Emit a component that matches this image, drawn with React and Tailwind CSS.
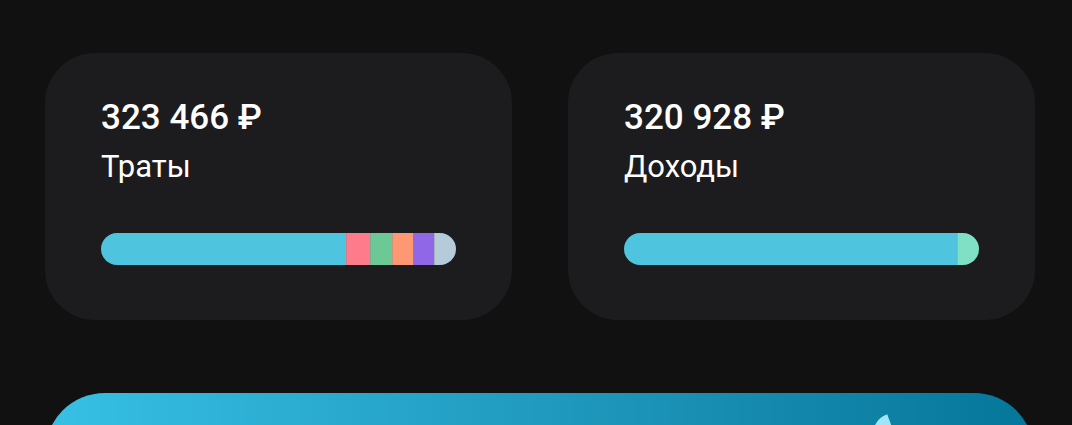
export default function App() {
  const spend = [
    { w: 245, c: "bg-[#4fc4df]" },
    { w: 24, c: "bg-[#fe7b8c]" },
    { w: 22, c: "bg-[#6cc894]" },
    { w: 21, c: "bg-[#fe9872]" },
    { w: 21, c: "bg-[#9067e6]" },
    { w: 22, c: "bg-[#b6cbd9]" },
  ];
  const income = [
    { w: 333, c: "bg-[#4fc4df]" },
    { w: 22, c: "bg-[#7fe0c6]" },
  ];
  const Card = ({ amount, label, segs }) => (
    <div className="w-[467px] h-[267px] rounded-[50px] bg-[#1c1c1e] pl-[56px] pt-[45px]">
      <div className="text-[35px] leading-[40px] font-medium text-white">{amount}</div>
      <div className="mt-[12px] text-[31px] leading-[34px] text-white">{label}</div>
      <div className="mt-[49px] flex h-[32px] w-[355px] overflow-hidden rounded-full">
        {segs.map((s, i) => (
          <div
            key={i}
            className={`${s.c} h-full ${i > 0 ? "border-l border-[#8a8a8a]/40" : ""}`}
            style={{ width: s.w }}
          />
        ))}
      </div>
    </div>
  );
  return (
    <div className="w-[1072px] h-[425px] overflow-hidden bg-[#111111] font-['Roboto',sans-serif]">
      <div className="flex gap-[56px] pl-[45px] pt-[53px]">
        <Card amount="323 466 ₽" label="Траты" segs={spend} />
        <Card amount="320 928 ₽" label="Доходы" segs={income} />
      </div>
      <div className="relative ml-[45px] mt-[73px] h-[200px] w-[989px] rounded-[60px] bg-gradient-to-r from-[#37c0e5] to-[#04769a] overflow-hidden">
        <div className="absolute left-[826px] top-[24px] h-[30px] w-[22px] rounded-tl-full rounded-tr-[10px] bg-[#9fe6f7] rotate-[-20deg]" />
      </div>
    </div>
  );
}
